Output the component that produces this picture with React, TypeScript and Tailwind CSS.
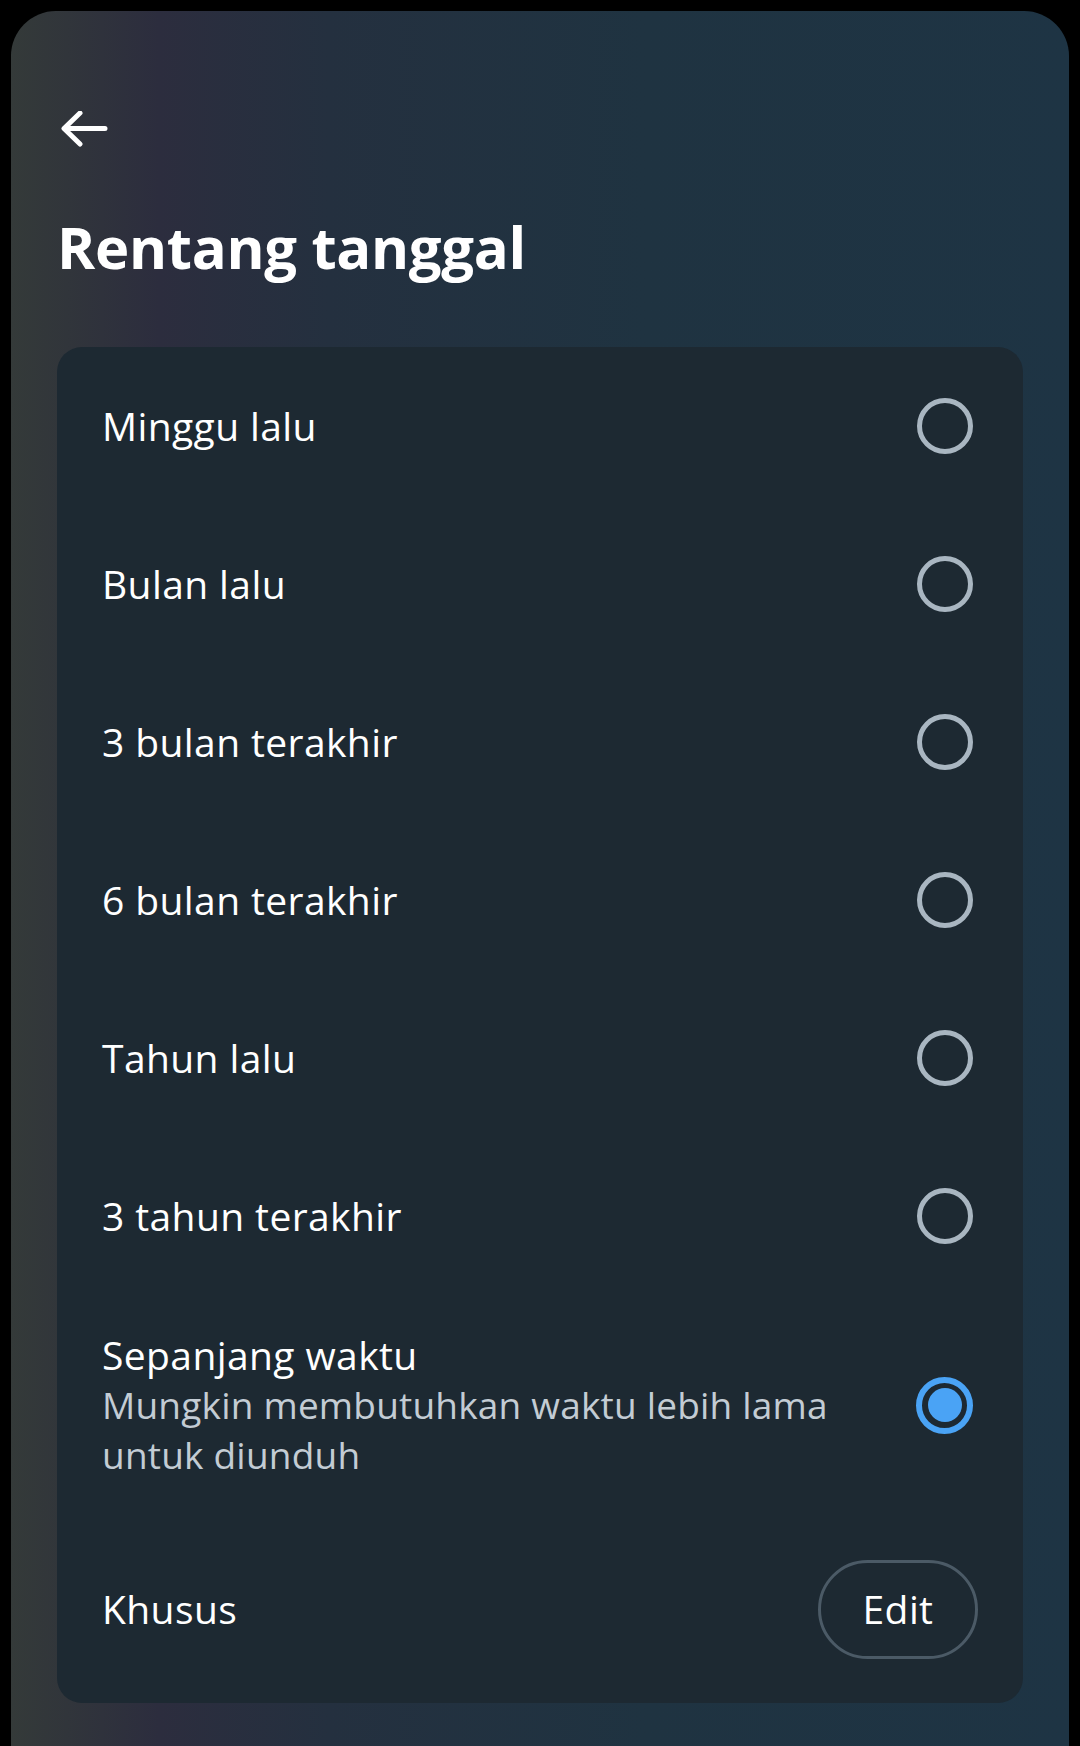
import React from "react";

const font = { fontFamily: "'Open Sans', 'Noto Sans', sans-serif" };

function Radio({ selected }: { selected?: boolean }) {
  if (selected) {
    return (
      <div className="mr-[5px] flex h-[57px] w-[57px] shrink-0 items-center justify-center rounded-full border-[6px] border-[#4aa3f5]">
        <div className="h-[34px] w-[34px] rounded-full bg-[#4aa3f5]" />
      </div>
    );
  }
  return <div className="mr-[5px] h-[56px] w-[56px] shrink-0 rounded-full border-[5px] border-[#a9b6c1]" />;
}

function Row({ label }: { label: string }) {
  return (
    <div className="flex h-[158px] items-center justify-between px-[45px]">
      <span className="text-[39px] leading-[50px] tracking-[0.4px] text-white">{label}</span>
      <Radio />
    </div>
  );
}

export default function App() {
  const items = ["Minggu lalu", "Bulan lalu", "3 bulan terakhir", "6 bulan terakhir", "Tahun lalu", "3 tahun terakhir"];
  return (
    <div className="min-h-[1746px] w-[1080px] overflow-hidden bg-black pt-[11px]" style={font}>
      <div className="mx-[11px] h-[1735px] rounded-t-[45px] bg-[linear-gradient(90deg,#343a39_0%,#2c2d3e_14%,#24303f_30%,#1f3341_60%,#1e3444_100%)] px-[46px] pt-[100px]">
        <svg width="48" height="36" viewBox="0 0 48 36" className="ml-[3px] block" fill="none">
          <path d="M45 17.5H5M20 2L4 17.5L20 33" stroke="white" strokeWidth="5" strokeLinecap="round" strokeLinejoin="round" />
        </svg>
        <h1 className="mt-[66px] text-[58px] font-bold leading-[67px] tracking-[-0.3px] text-white">Rentang tanggal</h1>
        <div className="mt-[67px] overflow-hidden rounded-[25px] bg-[#1d2932]">
          {items.map((t) => (
            <Row key={t} label={t} />
          ))}
          <div className="flex items-center justify-between px-[45px] py-[35px]">
            <div className="flex flex-col">
              <span className="text-[39px] leading-[50px] tracking-[0.4px] text-white">Sepanjang waktu</span>
              <span className="w-[760px] text-[37px] leading-[50px] tracking-[0.2px] text-[#c3ccd4]">
                Mungkin membutuhkan waktu lebih lama untuk diunduh
              </span>
            </div>
            <Radio selected />
          </div>
          <div className="flex h-[188px] items-center justify-between px-[45px]">
            <span className="text-[39px] leading-[50px] tracking-[0.4px] text-white">Khusus</span>
            <button className="flex h-[99px] w-[160px] items-center justify-center rounded-full border-[3px] border-[#4b5a66] text-[39px] tracking-[0.4px] text-white">
              Edit
            </button>
          </div>
        </div>
      </div>
    </div>
  );
}
